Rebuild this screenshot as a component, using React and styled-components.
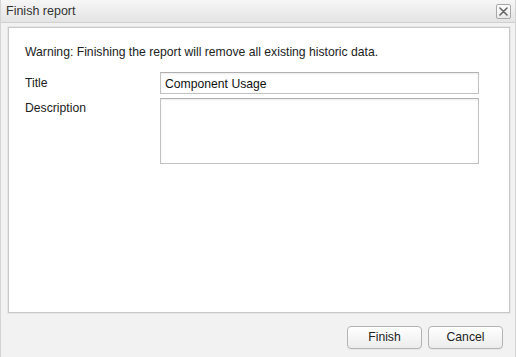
import React from 'react';
import styled, { createGlobalStyle } from 'styled-components';

const GlobalStyle = createGlobalStyle`
  html, body {
    margin: 0;
    padding: 0;
    background: #ffffff;
  }
  body {
    font-family: "Liberation Sans", Arial, sans-serif;
    font-size: 12.2px;
    color: #222;
  }
`;

const Dialog = styled.div`
  width: 516px;
  height: 357px;
  box-sizing: border-box;
  display: flex;
  flex-direction: column;
  background: #f2f2f2;
  border-left: 1px solid #d4d4d4;
  border-right: 1px solid #d4d4d4;
`;

const Header = styled.div`
  height: 23px;
  box-sizing: border-box;
  display: flex;
  align-items: center;
  justify-content: space-between;
  padding: 0 4px 0 5px;
  background: linear-gradient(#f6f6f6, #e4e4e4);
  border-bottom: 1px solid #d0d0d0;
`;

const HeaderTitle = styled.span`
  font-size: 12.5px;
  color: #333;
`;

const CloseButton = styled.button`
  width: 15px;
  height: 15px;
  padding: 0;
  display: flex;
  align-items: center;
  justify-content: center;
  background: linear-gradient(#ffffff, #e8e8e8);
  border: 1px solid #a8a8a8;
  border-radius: 2px;
  margin-top: 1px;
`;

const Body = styled.div`
  flex: 1;
  display: flex;
  flex-direction: column;
  padding: 4px 5px 0 7px;
`;

const Panel = styled.div`
  height: 286px;
  box-sizing: border-box;
  background: #ffffff;
  border: 1px solid #c8c8c8;
  box-shadow: 0 0 0 1px #e6e6e6;
  padding: 17px 20px 0 16px;
`;

const Warning = styled.p`
  margin: 0 0 12px;
  line-height: 15px;
`;

const Row = styled.div`
  display: flex;
  align-items: flex-start;
  margin-bottom: 4px;
`;

const Label = styled.label`
  width: 135px;
  line-height: 16px;
  padding-top: ${(p) => p.$offset || 3}px;
`;

const TextInput = styled.input`
  width: 319px;
  height: 22px;
  box-sizing: border-box;
  border: 1px solid #c2c2c2;
  border-top-color: #b0b0b0;
  box-shadow: inset 0 1px 2px rgba(0, 0, 0, 0.08);
  padding: 1px 4px 0;
  font: inherit;
  color: #111;
  outline: none;
`;

const TextArea = styled.textarea`
  width: 319px;
  height: 66px;
  box-sizing: border-box;
  border: 1px solid #c2c2c2;
  border-top-color: #b0b0b0;
  box-shadow: inset 0 1px 2px rgba(0, 0, 0, 0.08);
  resize: none;
  font: inherit;
  outline: none;
`;

const Footer = styled.div`
  flex: 1;
  display: flex;
  justify-content: flex-end;
  align-items: center;
  gap: 6px;
  padding: 4px 7px 0 0;
`;

const Button = styled.button`
  width: 75px;
  height: 23px;
  font: inherit;
  color: #222;
  background: linear-gradient(#ffffff, #ececec);
  border: 1px solid #b4b4b4;
  border-radius: 4px;
  box-shadow: 0 1px 0 rgba(0, 0, 0, 0.04);
`;

const CloseIcon = () => (
  <svg width="9" height="9" viewBox="0 0 9 9">
    <path d="M1 1 L8 8 M8 1 L1 8" stroke="#666" strokeWidth="1.6" strokeLinecap="round" />
  </svg>
);

export default function App() {
  return (
    <>
      <GlobalStyle />
      <Dialog>
        <Header>
          <HeaderTitle>Finish report</HeaderTitle>
          <CloseButton aria-label="Close">
            <CloseIcon />
          </CloseButton>
        </Header>
        <Body>
          <Panel>
            <Warning>Warning: Finishing the report will remove all existing historic data.</Warning>
            <Row>
              <Label>Title</Label>
              <TextInput defaultValue="Component Usage" />
            </Row>
            <Row>
              <Label $offset={2}>Description</Label>
              <TextArea />
            </Row>
          </Panel>
          <Footer>
            <Button>Finish</Button>
            <Button>Cancel</Button>
          </Footer>
        </Body>
      </Dialog>
    </>
  );
}
